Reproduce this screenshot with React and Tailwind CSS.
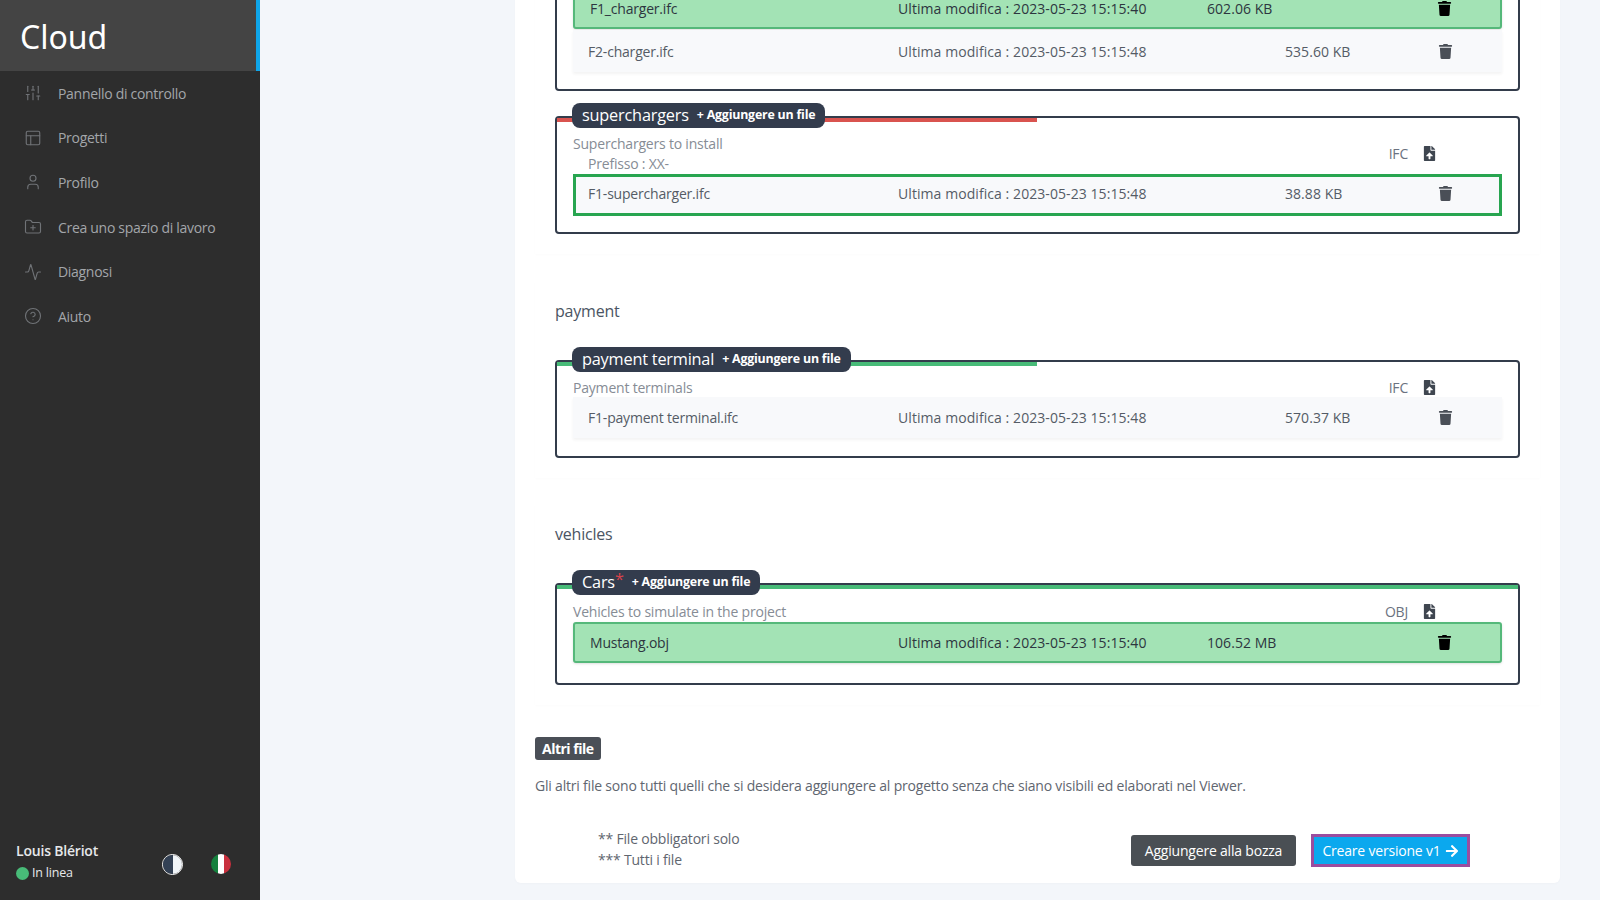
import React from "react";
import { SlidersVertical, PanelsTopLeft, User, FolderPlus, Activity, CircleHelp } from "lucide-react";
import { FaTrash, FaFileUpload, FaArrowRight } from "react-icons/fa";

const nav = [
  ["Pannello di controllo", SlidersVertical],
  ["Progetti", PanelsTopLeft],
  ["Profilo", User],
  ["Crea uno spazio di lavoro", FolderPlus],
  ["Diagnosi", Activity],
  ["Aiuto", CircleHelp],
];

function Row({ name, size, variant, tall }) {
  const green = variant === "green";
  const outlined = variant === "outlined";
  return (
    <div
      className={
        "flex items-center " +
        (tall ? "h-[42px] " : "h-[41px] ") +
        (green
          ? "bg-[#a3e3b5] border-2 border-[#55b87a] rounded-[3px] text-[#2d3640] shadow-sm"
          : outlined
          ? "bg-[#f8f9fb] border-[3px] border-[#28a550] text-[#555c66] pb-[3px]"
          : "bg-[#f8f9fb] text-[#555c66] shadow-[0_2px_3px_rgba(0,0,0,0.05)]")
      }
    >
      <span className={green ? "ml-[15px] w-[308px]" : outlined ? "ml-[12px] w-[310px]" : "ml-[15px] w-[310px]"}>{name}</span>
      <span className="w-[309px] whitespace-nowrap tracking-[0.07px]">Ultima modifica : 2023-05-23 15:15:{green ? "40" : "48"}</span>
      <span className={"tracking-[0.05px] " + (green ? "w-[230px]" : "w-[153px] ml-[78px]")}>{size}</span>
      <FaTrash className={"text-[15px] " + (green ? "text-black" : "text-[#4a4f57]")} />
    </div>
  );
}

function Pill({ title, star }) {
  return (
    <div className="absolute left-[15px] -top-[15px] h-[25px] flex items-center bg-[#333c4d] text-white rounded-[8px] px-[10px] whitespace-nowrap">
      <span className="text-[16.3px] leading-none">
        {title}
        {star && <span className="text-[#d9434b] relative -top-[3px]">*</span>}
      </span>
      <span className="text-[12.4px] font-bold ml-[8px]">+ Aggiungere un file</span>
    </div>
  );
}

function Box({ title, star, bar, barFull, desc, ext, prefix, headLeading, headMt, className, children }) {
  return (
    <div className={"relative border-2 border-[#333c4b] rounded-[4px] px-[16px] " + className}>
      <div className={"h-[4px] -mx-[16px] " + bar + " " + (barFull ? "" : "w-[480px]")} />
      <Pill title={title} star={star} />
      <div className={"flex items-center " + headMt}>
        <div className="flex-1">
          <div className={"text-[#868c95] " + headLeading}>{desc}</div>
          {prefix && <div className="text-[#868c95] pl-[15px] leading-[20px]">{prefix}</div>}
        </div>
        <span className={"text-[#6b7280] " + headLeading}>{ext}</span>
        <FaFileUpload className="ml-[14px] mr-[65px] text-[15px] text-[#3f4650]" />
      </div>
      {children}
    </div>
  );
}

const sectionCls = "px-[20px] shadow-[0_1px_2px_rgba(0,0,0,0.015)]";
const titleCls = "pt-[19px] text-[16px] text-[#4b5563] leading-[22px]";

export default function App() {
  return (
    <div className="h-screen w-full overflow-hidden flex bg-[#f3f6fa] text-[14px] tracking-[-0.2px] font-['Open_Sans',sans-serif]">
      <aside className="w-[260px] shrink-0 bg-[#2d2d2d] flex flex-col">
        <div className="h-[71px] bg-[#444444] border-r-[4px] border-[#0ea5e9] flex items-center pl-[20px]">
          <span className="text-white text-[32px] tracking-normal mt-[2px] font-['Noto_Sans',sans-serif]">Cloud</span>
        </div>
        <nav className="flex flex-col">
          {nav.map(([label, Icon]) => (
            <div key={label} className="flex items-center h-[44.6px] pl-[24px] text-[#a3a6aa] tracking-[-0.3px]">
              <Icon size={18} strokeWidth={1.5} className="text-[#707377]" />
              <span className="ml-[16px] whitespace-nowrap">{label}</span>
            </div>
          ))}
        </nav>
        <div className="mt-auto h-[80px] pt-[8px] pl-[16px] pr-[29px] flex items-center">
          <div className="flex-1 mb-[4px]">
            <div className="text-[14px] text-[#e6e8ea] font-semibold leading-[22px]">Louis Blériot</div>
            <div className="flex items-center text-[12.5px] leading-[22px] text-[#e6e8ea]">
              <span className="w-[13px] h-[13px] rounded-full bg-[#48bb78] mr-[3px]" />
              In linea
            </div>
          </div>
          <div className="w-[21px] h-[21px] rounded-full border border-white flex overflow-hidden mr-[28px]">
            <span className="w-1/2 bg-[#334155]" />
            <span className="w-1/2 bg-[#f1f5f9]" />
          </div>
          <div className="w-[20px] h-[20px] rounded-full flex overflow-hidden">
            <span className="flex-1 bg-[#15803d]" />
            <span className="flex-1 bg-white" />
            <span className="flex-1 bg-[#c9303e]" />
          </div>
        </div>
      </aside>
      <main className="flex-1 min-w-0 pl-[255px] pr-[40px]">
        <div className="-mt-[100px] h-[983px] bg-white rounded-[6px] px-[20px] pt-[66px] shadow-[0_1px_3px_rgba(0,0,0,0.02)]">
          <section className={sectionCls + " pb-[20px]"}>
            <div className="border-2 border-[#333c4b] rounded-[4px] px-[16px] pt-[20px] pb-[17px]">
              <Row name="F1_charger.ifc" size="602.06 KB" variant="green" />
              <div className="mt-[1px]">
                <Row name="F2-charger.ifc" size="535.60 KB" tall />
              </div>
            </div>
            <Box title="superchargers" bar="bg-[#d9534f]" desc="Superchargers to install" ext="IFC" prefix="Prefisso : XX-" headLeading="leading-[21px]" headMt="mt-[11px]" className="mt-[25px] pb-[16px]">
              <Row name="F1-supercharger.ifc" size="38.88 KB" variant="outlined" tall />
            </Box>
          </section>
          <section className={sectionCls + " mt-[27px] pb-[20px]"}>
            <div className={titleCls}>payment</div>
            <Box title="payment terminal" bar="bg-[#48bb78]" desc="Payment terminals" ext="IFC" headLeading="leading-[19px]" headMt="mt-[12px]" className="mt-[38px] pb-[18px]">
              <Row name="F1-payment terminal.ifc" size="570.37 KB" />
            </Box>
          </section>
          <section className={sectionCls + " mt-[26px] pb-[20px]"}>
            <div className={titleCls}>vehicles</div>
            <Box title="Cars" star bar="bg-[#48bb78]" barFull desc="Vehicles to simulate in the project" ext="OBJ" headLeading="leading-[21px]" headMt="mt-[12px]" className="mt-[38px] pb-[20px]">
              <Row name="Mustang.obj" size="106.52 MB" variant="green" />
            </Box>
          </section>
          <div className="mt-[32px]">
            <span className="block w-fit h-[23px] leading-[23px] rounded-[3px] bg-[#4a4f57] text-white font-bold px-[7px] tracking-[-0.5px]">Altri file</span>
            <p className="text-[#5f6670] mt-[15px] leading-[22px]">Gli altri file sono tutti quelli che si desidera aggiungere al progetto senza che siano visibili ed elaborati nel Viewer.</p>
            <div className="flex mt-[31px]">
              <div className="ml-[63px] flex-1 text-[#5f6670] leading-[21px]">
                <div>** File obbligatori solo</div>
                <div>*** Tutti i file</div>
              </div>
              <div className="flex items-center mr-[70px] h-[33px] mt-[6px]">
                <button className="h-[31px] w-[165px] rounded-[3px] bg-[#4a4f54] text-white">Aggiungere alla bozza</button>
                <button className="ml-[15px] h-[33px] w-[159px] border-[3px] border-[#9b4d9f] bg-[#0ba8ee] text-white flex items-center justify-center gap-[4px]">
                  Creare versione v1 <FaArrowRight className="text-[14px]" />
                </button>
              </div>
            </div>
          </div>
        </div>
      </main>
    </div>
  );
}
